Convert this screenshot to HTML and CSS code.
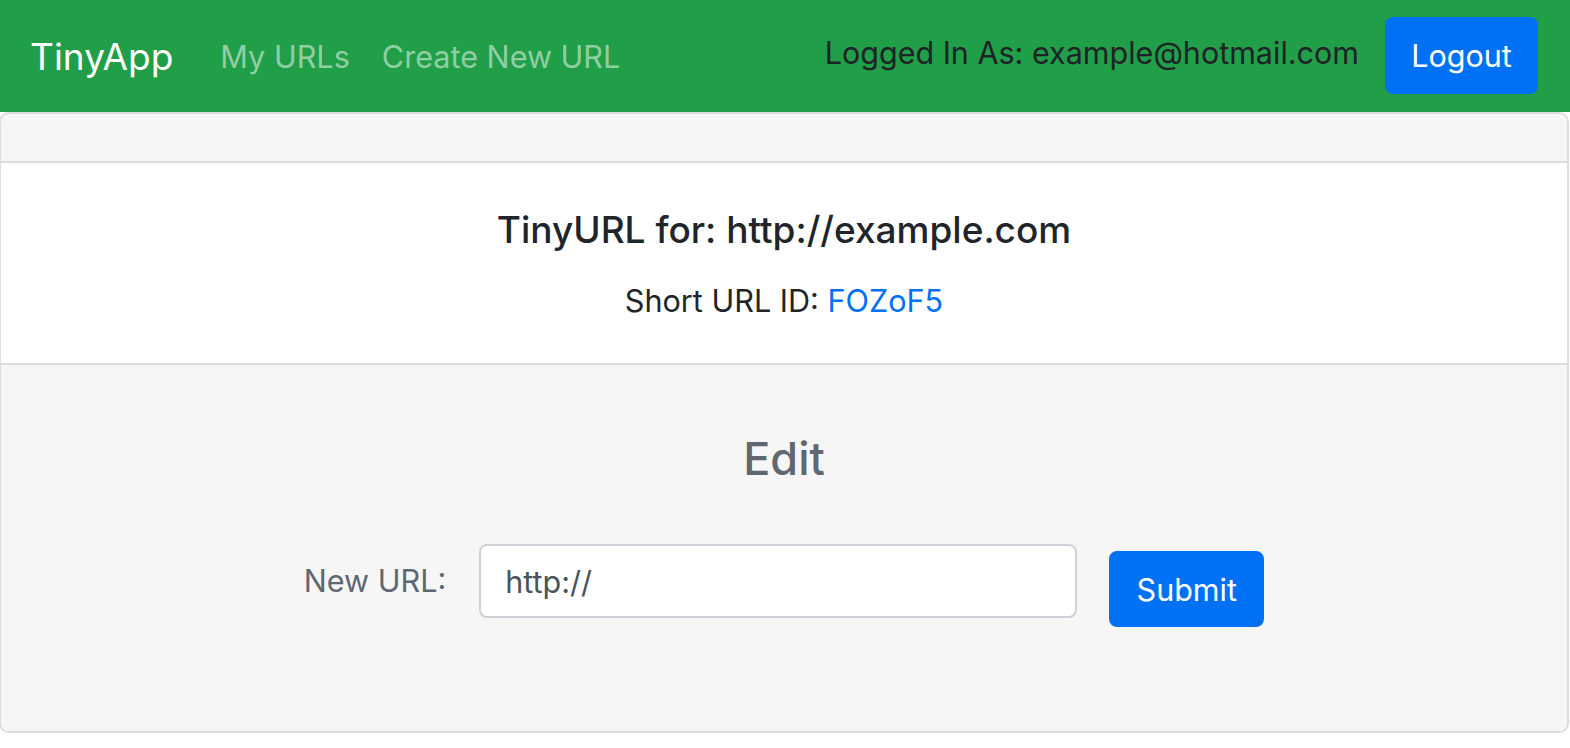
FILE: index.html
```html
<!DOCTYPE html>
<html lang="en">
<head>
<meta charset="utf-8">
<title>TinyApp</title>
<link rel="stylesheet" href="styles.css">
</head>
<body>
<nav class="navbar">
  <a class="brand" href="#">TinyApp</a>
  <ul class="nav-links">
    <li><a href="#">My URLs</a></li>
    <li><a href="#">Create New URL</a></li>
  </ul>
  <div class="nav-right">
    <span class="navbar-text">Logged In As: example@hotmail.com</span>
    <button class="btn logout" type="button">Logout</button>
  </div>
</nav>
<main class="card">
  <div class="card-header"></div>
  <div class="card-body">
    <h5 class="card-title">TinyURL for: http://example.com</h5>
    <p class="card-text">Short URL ID: <a href="#">FOZoF5</a></p>
  </div>
  <div class="card-footer">
    <h4 class="edit-title">Edit</h4>
    <form class="edit-form">
      <label class="form-label" for="longURL">New URL:</label>
      <input class="form-control" id="longURL" type="text" value="http://">
      <button class="btn submit" type="submit">Submit</button>
    </form>
  </div>
</main>
</body>
</html>
```
FILE: styles.css
```css
* { box-sizing: border-box; }
html, body { margin: 0; padding: 0; }
body {
  font-family: Inter, "Liberation Sans", Arial, sans-serif;
  color: #212529;
  background: #fff;
  width: 1570px;
  height: 748px;
}
a { text-decoration: none; }

.navbar {
  display: flex;
  align-items: center;
  height: 112px;
  padding: 0 32px 0 30px;
  background: #219e48;
}
.brand {
  color: #fff;
  font-size: 37px;
  line-height: 56px;
  margin-right: 31px;
  padding-top: 2px;
}
.nav-links {
  display: flex;
  list-style: none;
  margin: 0;
  padding: 0;
}
.nav-links a {
  display: block;
  padding: 2px 16px 0;
  font-size: 30.6px;
  line-height: 56px;
  color: #90cea3;
}
.nav-right {
  margin-left: auto;
  display: flex;
  align-items: center;
  gap: 26px;
}
.navbar-text {
  font-size: 30.5px;
  line-height: 48px;
  color: #1f2226;
  padding-bottom: 6px;
}
.btn {
  display: inline-flex;
  align-items: center;
  justify-content: center;
  font-family: inherit;
  font-size: 30.5px;
  color: #fff;
  background: #0070f4;
  border: 2px solid #0070f4;
  border-radius: 8px;
  padding: 0 24px;
  cursor: pointer;
}
.logout {
  height: 77px;
  width: 153px;
  margin-top: -1px;
}

.card {
  margin: 0 1px 0 -1px;
  border: 2px solid #dcdcdc;
  border-radius: 10px;
  overflow: hidden;
}
.card-header {
  height: 49px;
  background: #f6f6f6;
  border-bottom: 2px solid #dcdcdc;
}
.card-body {
  height: 202px;
  padding-top: 43px;
  text-align: center;
  background: #fff;
  border-bottom: 2px solid #dcdcdc;
}
.card-title {
  margin: 0;
  font-size: 37px;
  font-weight: 500;
  line-height: 48px;
  color: #212529;
}
.card-text {
  margin: 23px 0 0;
  font-size: 30.6px;
  line-height: 48px;
}
.card-text a { color: #0070f4; }

.card-footer {
  height: 366px;
  padding-top: 66px;
  background: #f6f6f6;
}
.edit-title {
  margin: 0;
  text-align: center;
  font-size: 45px;
  font-weight: 500;
  line-height: 56px;
  color: #5f6870;
}
.edit-form {
  margin-top: 57px;
  display: flex;
  align-items: flex-start;
  justify-content: center;
}
.form-label {
  font-size: 30.6px;
  line-height: 74px;
  color: #5f6870;
  margin-right: 33px;
}
.form-control {
  width: 598px;
  height: 74px;
  padding: 0 24px;
  font-family: inherit;
  font-size: 30.5px;
  color: #4b5359;
  background: #fff;
  border: 2px solid #ccd2d7;
  border-radius: 8px;
  outline: none;
}
.submit {
  margin-left: 32px;
  margin-top: 7px;
  height: 76px;
  width: 155px;
}
```
